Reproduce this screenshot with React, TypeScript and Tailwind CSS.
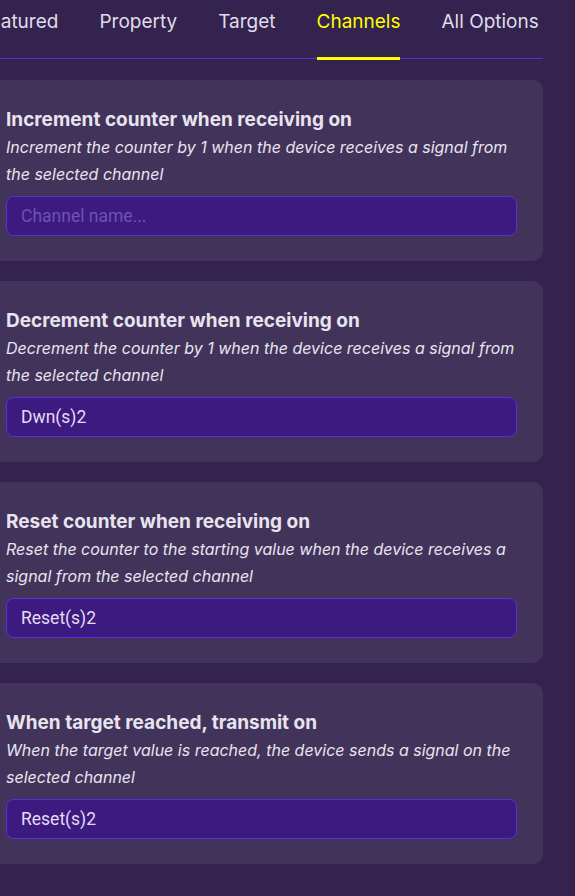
import React from "react";

const tabs = ["Featured", "Property", "Target", "Channels", "All Options"];

const cards = [
  {
    title: "Increment counter when receiving on",
    desc: "Increment the counter by 1 when the device receives a signal from the selected channel",
    value: "",
  },
  {
    title: "Decrement counter when receiving on",
    desc: "Decrement the counter by 1 when the device receives a signal from the selected channel",
    value: "Dwn(s)2",
  },
  {
    title: "Reset counter when receiving on",
    desc: "Reset the counter to the starting value when the device receives a signal from the selected channel",
    value: "Reset(s)2",
  },
  {
    title: "When target reached, transmit on",
    desc: "When the target value is reached, the device sends a signal on the selected channel",
    value: "Reset(s)2",
  },
];

export default function App() {
  return (
    <div
      className="w-[575px] h-[896px] overflow-hidden bg-[#33234e] text-[#e8e4ef]"
      style={{ fontFamily: "Inter, 'Noto Sans', sans-serif" }}
    >
      <div className="w-[563px] -ml-[20px] relative h-[59px] border-b border-[#5a2fd0] flex items-start gap-[41px]">
        <div className="w-0 shrink-0 -mr-[42px]" />
        {tabs.map((t) => (
          <div key={t} className="relative h-[59px] pt-[9px]">
            <span
              className={
                "text-[19px] leading-[26px] whitespace-nowrap " +
                (t === "Channels" ? "text-[#ffff00]" : "text-[#e0dcea]")
              }
            >
              {t}
            </span>
            {t === "Channels" && (
              <div className="absolute left-0 right-0 bottom-[-1px] h-[3px] bg-[#ffff00]" />
            )}
          </div>
        ))}
      </div>
      <div className="w-[563px] -ml-[20px] mt-[21px] flex flex-col gap-[20px]">
        {cards.map((c) => (
          <div
            key={c.title}
            className="bg-[#42335a] rounded-[10px] pt-[28px] pb-[25px] px-[26px]"
          >
            <div className="text-[19px] leading-[24px] font-bold text-[#e8e4ef] mb-[2px] whitespace-nowrap">
              {c.title}
            </div>
            <div className="text-[16px] leading-[27px] italic text-[#e8e4ef]">
              {c.desc}
            </div>
            <div
              className="mt-[8px] h-[40px] rounded-[8px] bg-[#3d1a80] border border-[#5b2ed6] flex items-center pl-[14px] text-[17.5px]"
              style={{ fontFamily: "Roboto, 'Noto Sans', sans-serif" }}
            >
              {c.value ? (
                <span className="text-[#e4dcf4]">{c.value}</span>
              ) : (
                <span className="text-[#6d52b3]">Channel name...</span>
              )}
            </div>
          </div>
        ))}
      </div>
    </div>
  );
}
